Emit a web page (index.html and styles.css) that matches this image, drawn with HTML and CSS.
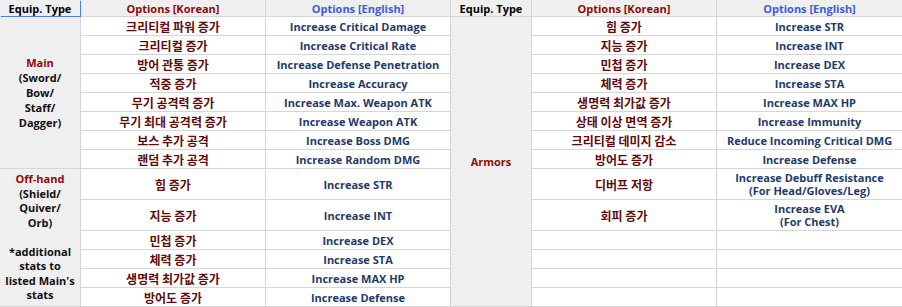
FILE: index.html
```html
<!DOCTYPE html>
<html>
<head>
<meta charset="utf-8">
<link rel="stylesheet" href="styles.css">
</head>
<body>
<div class="sheet">
  <div class="cell head sel">Equip. Type</div>
  <div class="cell head kr-h">Options [Korean]</div>
  <div class="cell head en-h">Options [English]</div>
  <div class="cell head">Equip. Type</div>
  <div class="cell head kr-h">Options [Korean]</div>
  <div class="cell head en-h">Options [English]</div>

  <div class="cell type main"><div><span class="red">Main</span><br>(Sword/<br>Bow/<br>Staff/<br>Dagger)</div></div>
  <div class="cell kr">크리티컬 파워 증가</div>
  <div class="cell en">Increase Critical Damage</div>
  <div class="cell type armor"><span class="red">Armors</span></div>
  <div class="cell kr">힘 증가</div>
  <div class="cell en">Increase STR</div>

  <div class="cell kr">크리티컬 증가</div>
  <div class="cell en">Increase Critical Rate</div>
  <div class="cell kr">지능 증가</div>
  <div class="cell en">Increase INT</div>

  <div class="cell kr">방어 관통 증가</div>
  <div class="cell en">Increase Defense Penetration</div>
  <div class="cell kr">민첩 증가</div>
  <div class="cell en">Increase DEX</div>

  <div class="cell kr">적중 증가</div>
  <div class="cell en">Increase Accuracy</div>
  <div class="cell kr">체력 증가</div>
  <div class="cell en">Increase STA</div>

  <div class="cell kr">무기 공격력 증가</div>
  <div class="cell en">Increase Max. Weapon ATK</div>
  <div class="cell kr">생명력 최가값 증가</div>
  <div class="cell en">Increase MAX HP</div>

  <div class="cell kr">무기 최대 공격력 증가</div>
  <div class="cell en">Increase Weapon ATK</div>
  <div class="cell kr">상태 이상 면역 증가</div>
  <div class="cell en">Increase Immunity</div>

  <div class="cell kr">보스 추가 공격</div>
  <div class="cell en">Increase Boss DMG</div>
  <div class="cell kr">크리티컬 데미지 감소</div>
  <div class="cell en">Reduce Incoming Critical DMG</div>

  <div class="cell kr">랜덤 추가 공격</div>
  <div class="cell en">Increase Random DMG</div>
  <div class="cell kr">방어도 증가</div>
  <div class="cell en">Increase Defense</div>

  <div class="cell type off"><div><span class="red">Off-hand</span><br>(Shield/<br>Quiver/<br>Orb)<br><br>*additional<br>stats to<br>listed Main's<br>stats</div></div>
  <div class="cell kr">힘 증가</div>
  <div class="cell en">Increase STR</div>
  <div class="cell kr">디버프 저항</div>
  <div class="cell en two">Increase Debuff Resistance<br>(For Head/Gloves/Leg)</div>

  <div class="cell kr">지능 증가</div>
  <div class="cell en">Increase INT</div>
  <div class="cell kr">회피 증가</div>
  <div class="cell en two">Increase EVA<br>(For Chest)</div>

  <div class="cell kr">민첩 증가</div>
  <div class="cell en">Increase DEX</div>
  <div class="cell"></div>
  <div class="cell"></div>

  <div class="cell kr">체력 증가</div>
  <div class="cell en">Increase STA</div>
  <div class="cell"></div>
  <div class="cell"></div>

  <div class="cell kr">생명력 최가값 증가</div>
  <div class="cell en">Increase MAX HP</div>
  <div class="cell"></div>
  <div class="cell"></div>

  <div class="cell kr">방어도 증가</div>
  <div class="cell en">Increase Defense</div>
  <div class="cell"></div>
  <div class="cell"></div>
</div>
</body>
</html>
```

FILE: styles.css
```css
html, body {
  margin: 0;
  padding: 0;
  background: #ffffff;
}

.sheet {
  display: grid;
  grid-template-columns: 80px 184px 184px 80px 184px 185px;
  grid-template-rows: 16px repeat(8, 18px) 30px 30px repeat(4, 18px);
  gap: 1px;
  padding-bottom: 1px;
  background: #d6d6d6;
  width: 902px;
  font-family: "Open Sans", "Noto Sans", sans-serif;
  font-size: 11px;
  font-weight: 700;
}

.cell {
  background: #ffffff;
  display: flex;
  align-items: center;
  justify-content: center;
  text-align: center;
  white-space: nowrap;
  overflow: hidden;
}

.head {
  background: #efefef;
  color: #000000;
}

.sel {
  box-shadow: 1px 1px 0 #4a7fe0;
  overflow: visible;
  position: relative;
  z-index: 1;
}

.kr-h {
  color: #8b0a0a;
}

.en-h {
  color: #3c5bd6;
}

.kr {
  font-family: "Noto Sans CJK KR", "Noto Sans", sans-serif;
  font-size: 12px;
  font-weight: 700;
  color: #5e0b0b;
}

.en {
  color: #1f3a66;
}

.two {
  line-height: 13.5px;
}

.type {
  background: #efefef;
  color: #111111;
}

.main {
  grid-row: span 8;
  line-height: 15px;
}

.off {
  grid-row: span 6;
  line-height: 14.5px;
}

.armor {
  grid-row: span 14;
}

.red {
  color: #8b0a0a;
}
```
